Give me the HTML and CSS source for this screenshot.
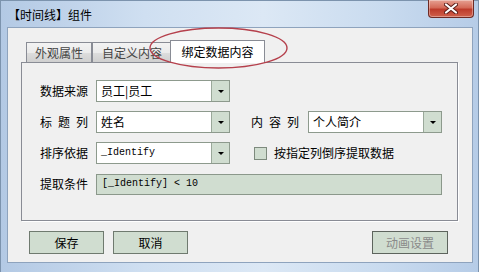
FILE: index.html
```html
<!DOCTYPE html>
<html lang="zh-CN">
<head>
<meta charset="utf-8">
<title>时间线组件</title>
<link rel="stylesheet" href="styles.css">
</head>
<body>
<div class="window">
  <div class="titlebar">
    <span class="title">【时间线】组件</span>
    <div class="close">
      <svg width="14" height="11" viewBox="0 0 14 11"><path d="M2 1.5 L12 9.5 M12 1.5 L2 9.5" stroke="#5a1d18" stroke-width="4" stroke-linecap="round"/><path d="M2 1.5 L12 9.5 M12 1.5 L2 9.5" stroke="#fff" stroke-width="2.2" stroke-linecap="round"/></svg>
    </div>
  </div>
  <div class="client">
    <div class="tabs">
      <div class="tab t1">外观属性</div>
      <div class="tab t2">自定义内容</div>
      <div class="tab active">绑定数据内容</div>
    </div>
    <div class="panel">
      <div class="form">
        <span class="lbl">数据来源</span>
        <div class="combo"><span class="val">员工|员工</span><span class="drop"><i class="arrow"></i></span></div>
        <span class="sp"></span><span class="sp"></span><span class="sp"></span>

        <span class="lbl">标 题 列</span>
        <div class="combo"><span class="val">姓名</span><span class="drop"><i class="arrow"></i></span></div>
        <span class="sp"></span>
        <span class="lbl">内 容 列</span>
        <div class="combo"><span class="val">个人简介</span><span class="drop"><i class="arrow"></i></span></div>

        <span class="lbl">排序依据</span>
        <div class="combo"><span class="val mono">_Identify</span><span class="drop"><i class="arrow"></i></span></div>
        <span class="sp"></span>
        <label class="check"><span class="box"></span><span>按指定列倒序提取数据</span></label>

        <span class="lbl lbl4">提取条件</span>
        <div class="field mono">[_Identify] &lt; 10</div>
      </div>
    </div>
    <div class="buttons">
      <div class="group">
        <button class="btn">保存</button>
        <button class="btn">取消</button>
      </div>
      <button class="btn disabled">动画设置</button>
    </div>
  </div>
  <svg class="ring" width="140" height="43" viewBox="0 0 140 43"><ellipse cx="69.5" cy="21" rx="68.5" ry="20" fill="none" stroke="#b5404c" stroke-width="1.4"/></svg>
</div>
</body>
</html>
```

FILE: styles.css
```css
* { box-sizing: border-box; }
html, body { margin: 0; padding: 0; background: #fff; }
body { font-family: "Noto Sans CJK SC", "Noto Sans", sans-serif; font-size: 12px; color: #000; }

.window {
  position: relative;
  width: 479px;
  height: 272px;
  padding: 0 5px 9px 6px;
  display: flex;
  flex-direction: column;
  background: linear-gradient(to right, #b3c9e4 0%, #cfdff1 30%, #dce8f5 55%, #c9dbef 80%, #b6cce7 100%);
  border: 1px solid #7c93ad;
  border-bottom: 0;
}

.titlebar {
  height: 26px;
  flex: none;
  display: flex;
  justify-content: space-between;
  align-items: flex-start;
  padding-left: 1px;
}
.title { line-height: 14px; margin-top: 7px; font-size: 12px; }

.close {
  width: 46px;
  height: 18px;
  margin-top: -1px;
  margin-right: -1px;
  border: 1px solid #6e2a24;
  border-top: 0;
  border-radius: 0 0 4px 4px;
  background: linear-gradient(to bottom, #e6a193 0%, #d46a58 45%, #bd3b2b 55%, #cf604b 100%);
  display: flex;
  align-items: center;
  justify-content: center;
  box-shadow: inset 0 0 0 1px rgba(255,255,255,0.35);
}

.client {
  flex: 1;
  background: #f0f0f0;
  border: 1px solid #8ea3bd;
  display: flex;
  flex-direction: column;
  padding-top: 12px;
}

.tabs {
  height: 22px;
  margin: 0 14px 0 13px;
  padding-left: 5px;
  display: flex;
  align-items: flex-end;
  position: relative;
  z-index: 2;
}
.tab {
  height: 20px;
  border: 1px solid #898c95;
  border-bottom: 0;
  background: linear-gradient(to bottom, #f3f3f3 0%, #ebebeb 50%, #dddddd 51%, #cfcfcf 100%);
  color: #444;
  display: flex;
  align-items: center;
  justify-content: center;
  line-height: 1;
}
.t1 { width: 66px; }
.t2 { width: 80px; }
.tab.active {
  width: 95px;
  height: 23px;
  margin-left: -2px;
  margin-bottom: -1px;
  background: #fff;
  color: #000;
  padding-bottom: 1px;
}

.panel {
  height: 159px;
  margin: 0 14px 0 13px;
  border: 1px solid #898c95;
  box-shadow: 1px 1px 0 #fff;
  background: #f0f0f0;
  padding: 17px 0 0 18px;
}

.form {
  display: grid;
  grid-template-columns: 56px 134px 21px 57px 134px;
  grid-template-rows: 22px 22px 22px 21px;
  row-gap: 9px;
  align-items: center;
}
.form > :nth-child(n+15) { margin-top: 1px; }
.lbl {
  width: 48px;
  line-height: 1;
  text-align: justify;
  text-align-last: justify;
}
.lbl4 { grid-column: 1; }

.combo {
  height: 22px;
  display: flex;
  border: 1px solid #8d9a8d;
  background: #fff;
}
.val {
  flex: 1;
  padding-left: 4px;
  display: flex;
  align-items: center;
  line-height: 1;
}
.mono { font-family: "Liberation Mono", "DejaVu Sans Mono", monospace; font-size: 10px; }
.drop {
  width: 18px;
  border-left: 1px solid #9aa89a;
  background: #d0ddd0;
  display: flex;
  align-items: center;
  justify-content: center;
}
.arrow {
  width: 0;
  height: 0;
  border-left: 3px solid transparent;
  border-right: 3px solid transparent;
  border-top: 3px solid #000;
}

.check {
  grid-column: 4 / 6;
  display: flex;
  align-items: center;
  gap: 7px;
  padding-left: 3px;
  line-height: 1;
}
.box {
  width: 13px;
  height: 13px;
  border: 1px solid #7d8a7d;
  background: #d0ddd0;
}

.field {
  grid-column: 2 / 6;
  height: 21px;
  border: 1px solid #8b988b;
  background: #d0ddd0;
  display: flex;
  align-items: center;
  padding-left: 5px;
  line-height: 1;
}

.buttons {
  margin-top: 10px;
  padding: 0 24px 0 21px;
  display: flex;
  justify-content: space-between;
}
.group { display: flex; gap: 9px; }
.btn {
  width: 75px;
  height: 23px;
  border: 1px solid #6f7a6f;
  background: #d0ddd0;
  font-family: "Noto Sans CJK SC", sans-serif;
  font-size: 12px;
  color: #000;
  padding: 0;
  line-height: 1;
}
.btn.disabled { width: 76px; color: #8a8a8a; border-color: #5d645d; }

.ring {
  position: absolute;
  left: 148px;
  top: 26px;
  z-index: 5;
}
```
